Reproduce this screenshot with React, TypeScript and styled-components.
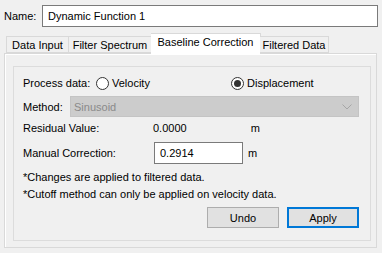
import React from "react";
import styled, { createGlobalStyle } from "styled-components";

const Global = createGlobalStyle`
  html, body { margin: 0; padding: 0; background: #f0f0f0; }
  body { font-family: "Liberation Sans", Arial, sans-serif; font-size: 11px; color: #000; }
  * { box-sizing: border-box; }
`;

const Window = styled.div`
  width: 382px;
  height: 253px;
  background: #f0f0f0;
  display: flex;
  flex-direction: column;
  overflow: hidden;
`;

const NameRow = styled.div`
  display: flex;
  align-items: center;
  padding: 5px 4px 0 4px;
  height: 27px;
`;

const Label = styled.span<{ $w?: number }>`
  display: inline-block;
  width: ${(p) => (p.$w ? `${p.$w}px` : "auto")};
  flex: none;
  white-space: nowrap;
  line-height: 16px;
`;

const TextBox = styled.div<{ $w?: number }>`
  height: 22px;
  border: 1px solid #7a7a7a;
  background: #fff;
  padding: 0 5px;
  display: flex;
  align-items: center;
  white-space: nowrap;
  ${(p) => (p.$w ? `width: ${p.$w}px; flex: none;` : "flex: 1;")}
`;

const TabStrip = styled.div`
  display: flex;
  align-items: flex-end;
  height: 20px;
  margin-top: 6px;
  padding-left: 6px;
  position: relative;
  z-index: 1;
`;

const Tab = styled.div<{ $w: number; $active?: boolean }>`
  width: ${(p) => p.$w}px;
  height: ${(p) => (p.$active ? 21 : 17)}px;
  margin-bottom: ${(p) => (p.$active ? -1 : 0)}px;
  margin-left: ${(p) => (p.$active ? -1 : 0)}px;
  margin-right: ${(p) => (p.$active ? -1 : 0)}px;
  background: ${(p) => (p.$active ? "#ffffff" : "#f0f0f0")};
  border: 1px solid #d9d9d9;
  border-bottom: ${(p) => (p.$active ? "none" : "1px solid #d9d9d9")};
  display: flex;
  align-items: ${(p) => (p.$active ? "flex-start" : "center")};
  padding-top: ${(p) => (p.$active ? 2 : 0)}px;
  justify-content: center;
  white-space: nowrap;
  & + & { border-left: ${(p) => (p.$active ? "1px solid #d9d9d9" : "none")}; }
`;

const Panel = styled.div`
  margin: 0 5px 0 4px;
  height: 195px;
  border: 1px solid #d9d9d9;
  box-shadow: inset 1px 1px 0 #ffffff;
  background: #f0f0f0;
  padding: 12px 5px 6px 8px;
  display: flex;
`;

const Group = styled.div`
  flex: 1;
  border: 1px solid #dcdcdc;
  padding: 8px 11px 0 9px;
  display: flex;
  flex-direction: column;
`;

const Row = styled.div<{ $h: number; $mt: number }>`
  display: flex;
  align-items: center;
  height: ${(p) => p.$h}px;
  margin-top: ${(p) => p.$mt}px;
  white-space: nowrap;
`;

const RadioWrap = styled.label<{ $w: number }>`
  display: flex;
  align-items: center;
  width: ${(p) => p.$w}px;
  flex: none;
  gap: 3px;
`;

const RadioCircle = styled.span<{ $checked?: boolean }>`
  width: 13px;
  height: 13px;
  border-radius: 50%;
  border: 1px solid #333;
  background: #fff;
  display: flex;
  align-items: center;
  justify-content: center;
  &::after {
    content: "";
    width: 7px;
    height: 7px;
    border-radius: 50%;
    background: ${(p) => (p.$checked ? "#333" : "transparent")};
  }
`;

const Combo = styled.div`
  flex: 1;
  height: 21px;
  background: #cccccc;
  border: 1px solid #c4c4c4;
  color: #8a8a8a;
  display: flex;
  align-items: center;
  justify-content: space-between;
  padding: 0 6px 0 3px;
`;

const Value = styled.span<{ $x: number }>`
  margin-left: ${(p) => p.$x}px;
`;

const Buttons = styled.div`
  display: flex;
  justify-content: flex-end;
  gap: 8px;
  margin-top: 5px;
`;

const Button = styled.div<{ $default?: boolean }>`
  width: 72px;
  height: 21px;
  background: #e1e1e1;
  border: ${(p) => (p.$default ? "2px solid #0078d7" : "1px solid #adadad")};
  display: flex;
  align-items: center;
  justify-content: center;
`;

const Chevron = () => (
  <svg width="10" height="6" viewBox="0 0 10 6">
    <path d="M0.5 0.5 L5 5 L9.5 0.5" fill="none" stroke="#a6a6a6" strokeWidth="1" />
  </svg>
);

export default function App() {
  return (
    <Window>
      <Global />
      <NameRow>
        <Label $w={38}>Name:</Label>
        <TextBox>Dynamic Function 1</TextBox>
      </NameRow>
      <TabStrip>
        <Tab $w={63}>Data Input</Tab>
        <Tab $w={83}>Filter Spectrum</Tab>
        <Tab $w={110} $active>Baseline Correction</Tab>
        <Tab $w={69}>Filtered Data</Tab>
      </TabStrip>
      <Panel>
        <Group>
          <Row $h={16} $mt={0}>
            <Label $w={73}>Process data:</Label>
            <RadioWrap $w={135}>
              <RadioCircle />
              Velocity
            </RadioWrap>
            <RadioWrap $w={100}>
              <RadioCircle $checked />
              Displacement
            </RadioWrap>
          </Row>
          <Row $h={21} $mt={5}>
            <Label $w={47}>Method:</Label>
            <Combo>
              <span>Sinusoid</span>
              <Chevron />
            </Combo>
          </Row>
          <Row $h={16} $mt={3}>
            <Label $w={130}>Residual Value:</Label>
            <span>0.0000</span>
            <Value $x={64}>m</Value>
          </Row>
          <Row $h={22} $mt={6}>
            <Label $w={131}>Manual Correction:</Label>
            <TextBox $w={89}>0.2914</TextBox>
            <Value $x={5}>m</Value>
          </Row>
          <Row $h={16} $mt={5}>*Changes are applied to filtered data.</Row>
          <Row $h={16} $mt={1}>*Cutoff method can only be applied on velocity data.</Row>
          <Buttons>
            <Button>Undo</Button>
            <Button $default>Apply</Button>
          </Buttons>
        </Group>
      </Panel>
    </Window>
  );
}
